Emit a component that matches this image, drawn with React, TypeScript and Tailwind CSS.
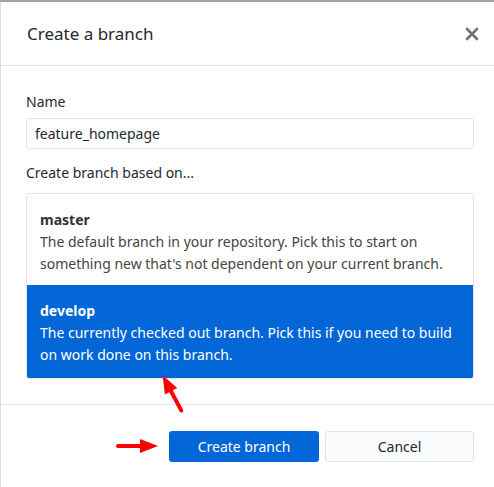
import React from 'react'

const font = { fontFamily: '"Noto Sans", "Open Sans", sans-serif' }

function Arrow({ className, rotate }: { className: string; rotate: number }) {
    return (
        <svg className={`absolute ${className}`} width="44" height="20" viewBox="0 0 44 20" style={{ transform: `rotate(${rotate}deg)` }}>
            <line x1="2" y1="10" x2="28" y2="10" stroke="#ff0000" strokeWidth="4" strokeLinecap="round" />
            <polygon points="24,3 42,10 24,17" fill="#ff0000" />
        </svg>
    )
}

export default function App() {
    return (
        <div className="relative w-[494px] h-[487px] bg-white text-[#24292e] border-t-2 border-[#a3a3a3] overflow-hidden" style={font}>
            <div className="h-full border-l border-[#dcdcdc] flex flex-col">
                <div className="h-[64px] shrink-0 flex items-center justify-between pl-[26px] pr-[15px] border-b border-[#e1e4e8]">
                    <h1 className="text-[17px] text-[#24292e]">Create a branch</h1>
                    <svg width="14" height="14" viewBox="0 0 14 14">
                        <path d="M2 2 L12 12 M12 2 L2 12" stroke="#6a737d" strokeWidth="2.6" strokeLinecap="round" />
                    </svg>
                </div>
                <div className="pl-[25px] pr-[20px] pt-[26px] border-b border-[#e1e4e8] h-[339px] shrink-0 text-[14px]">
                    <div className="leading-[20px]">Name</div>
                    <div className="mt-[6px] h-[31px] border border-[#e1e4e8] rounded-[3px] px-[8px] flex items-center">feature_homepage</div>
                    <div className="mt-[14px] leading-[20px]">Create branch based on...</div>
                    <div className="mt-[10px] border border-[#e1e4e8] rounded-[3px] overflow-hidden">
                        <div className="h-[91px] px-[13px] pt-[15px] leading-[22px]">
                            <div className="font-bold text-[#333]">master</div>
                            <div className="text-[#444]">The default branch in your repository. Pick this to start on something new that's not dependent on your current branch.</div>
                        </div>
                        <div className="h-[93px] px-[13px] pt-[15px] leading-[22px] bg-[#0366d6] text-white">
                            <div className="font-bold">develop</div>
                            <div>The currently checked out branch. Pick this if you need to build on work done on this branch.</div>
                        </div>
                    </div>
                </div>
                <div className="flex justify-end gap-[6px] pr-[20px] pt-[26px] text-[14px]">
                    <button className="w-[150px] h-[31px] rounded-[3px] bg-[#0366d6] text-white">Create branch</button>
                    <button className="w-[149px] h-[31px] rounded-[3px] bg-[#fafbfc] border border-[#e1e4e8] text-[#24292e]">Cancel</button>
                </div>
            </div>
            <Arrow className="left-[150px] top-[381px]" rotate={-118} />
            <Arrow className="left-[116px] top-[434px]" rotate={0} />
        </div>
    )
}
